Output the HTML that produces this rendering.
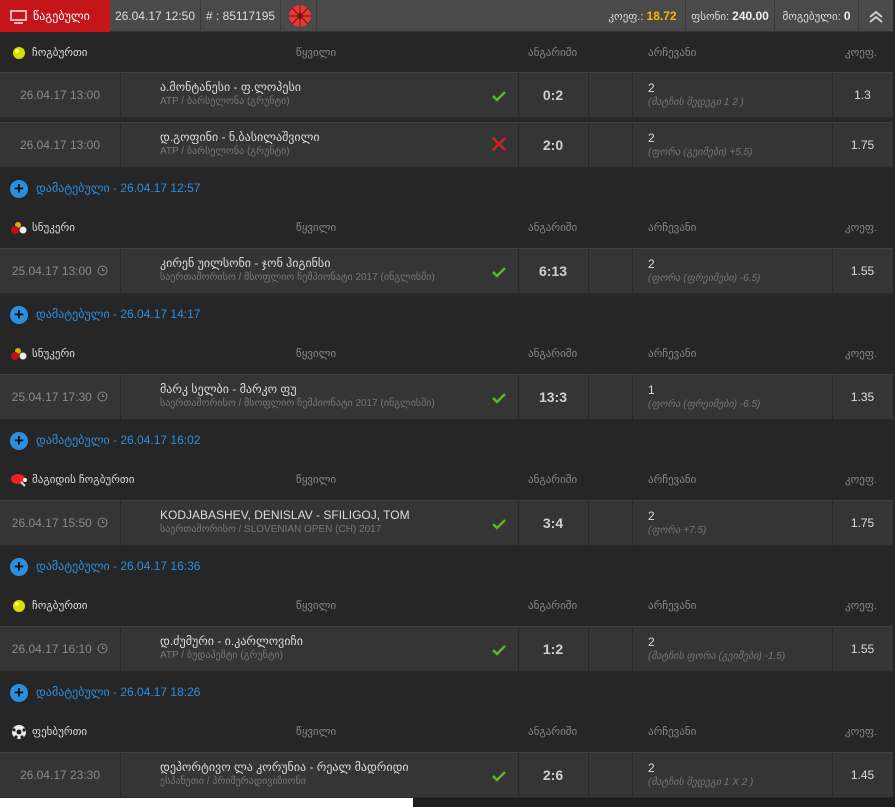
<!DOCTYPE html>
<html><head><meta charset="utf-8"><style>
*{margin:0;padding:0;box-sizing:border-box}
body{width:895px;height:807px;background:#262626;font-family:"Liberation Sans","DejaVu Sans",sans-serif;position:relative;overflow:hidden;color:#ccc}
.top{position:absolute;left:0;top:0;width:893px;height:32px;background:#4a4a4a;border-bottom:1px solid #333;font-size:12px}
.top>div{position:absolute;top:0;height:32px;line-height:32px;border-right:1px solid #3a3a3a}
.abs{position:absolute}
.hdr{position:absolute;left:0;width:893px;height:40px;font-size:11px;color:#888}
.hdr span{position:absolute;top:0;line-height:40px}
.row{position:absolute;left:0;width:893px;height:46px;background:#353535;border-top:1px solid #404040;border-bottom:1px solid #2a2a2a}
.c{position:absolute;top:0;height:44px;border-left:1px solid #262626}
.date{position:absolute;left:0;width:120px;top:0;line-height:44px;text-align:center;color:#8a8a8a;font-size:12px}
.ev{position:absolute;left:160px;top:7px;font-size:12px;color:#ddd;white-space:nowrap}
.ev small{display:block;font-size:10px;color:#777;margin-top:2px}
.score{position:absolute;left:518px;width:70px;line-height:44px;text-align:center;font-weight:bold;font-size:14px;color:#d0d0d0}
.pick{position:absolute;left:648px;top:8px;font-size:12px;color:#ddd}
.pick small{display:block;font-size:10px;color:#777;font-style:italic;margin-top:2px}
.odd{position:absolute;left:833px;width:59px;line-height:44px;text-align:center;font-size:12px;color:#ddd}
.add{position:absolute;left:10px;height:20px;font-size:12px;color:#2b8fe0;line-height:20px}
.add i{display:inline-block;width:18px;height:18px;border-radius:50%;background:#2b8fe0;color:#111;font-style:normal;font-weight:bold;text-align:center;line-height:18px;font-size:17px;vertical-align:middle;margin-right:8px}
.chk{position:absolute;left:492px;top:14px}
</style></head><body>
<div class="top">
 <div style="left:0;width:110px;background:#c4151b;color:#fff;padding-left:10px;border:none">
  <svg width="17" height="14" style="vertical-align:middle;margin-right:6px" viewBox="0 0 17 14"><rect x="1" y="1" width="15" height="9" fill="none" stroke="#f7b4b4" stroke-width="2"/><rect x="4" y="12" width="9" height="2" fill="#f7b4b4"/></svg>წაგებული</div>
 <div style="left:110px;width:91px;text-align:center;color:#ddd">26.04.17 12:50</div>
 <div style="left:201px;width:80px;text-align:center;color:#ddd"># : 85117195</div>
 <div style="left:281px;width:36px"><svg width="24" height="24" style="position:absolute;left:7px;top:4px" viewBox="0 0 24 24"><circle cx="12" cy="12" r="11" fill="#e53935"/><g stroke="#7a1010" stroke-width="1"><line x1="12" y1="1" x2="12" y2="23"/><line x1="1" y1="12" x2="23" y2="12"/><line x1="4" y1="4" x2="20" y2="20"/><line x1="20" y1="4" x2="4" y2="20"/></g><circle cx="12" cy="12" r="3" fill="#7a1010"/></svg></div>
 <div style="left:600px;width:86px;text-align:center;color:#ddd;font-size:11px">კოეფ.: <b style="color:#f5b800;font-size:12px">18.72</b></div>
 <div style="left:686px;width:89px;text-align:center;color:#ddd;font-size:11px">ფსონი: <b style="color:#eee;font-size:12px">240.00</b></div>
 <div style="left:775px;width:84px;text-align:center;color:#ddd;font-size:11px">მოგებული: <b style="color:#eee;font-size:12px">0</b></div>
 <div style="left:859px;width:34px;border:none;text-align:center"><svg width="16" height="14" viewBox="0 0 16 14" style="vertical-align:middle"><path d="M2 7 L8 2 L14 7 M2 12 L8 7 L14 12" fill="none" stroke="#ccc" stroke-width="2"/></svg></div>
</div>
<div class="abs" style="left:0;top:797px;width:413px;height:10px;background:#fff"></div>
<div class="abs" style="left:413px;top:797px;width:482px;height:10px;background:#1e1e1e"></div>
<div id="g"></div>
<script>
const H=(y,icon,name)=>`<div class="hdr" style="top:${y}px"><span style="left:12px;color:#ddd">${icon}</span><span style="left:32px;color:#ddd">${name}</span><span style="left:296px">წყვილი</span><span style="left:528px">ანგარიში</span><span style="left:648px">არჩევანი</span><span style="left:845px">კოეფ.</span></div>`;
const ball='<svg width="14" height="14" style="vertical-align:middle"><circle cx="7" cy="7" r="6" fill="#d6e000"/><circle cx="5" cy="5" r="2" fill="#f2ff60"/></svg>';
const snk='<svg width="18" height="14" style="vertical-align:middle;margin-left:-2px"><circle cx="8" cy="4" r="3" fill="#d8b000"/><circle cx="5" cy="9" r="4" fill="#c01010"/><circle cx="13" cy="9" r="3.5" fill="#eee"/></svg>';
const tt='<svg width="18" height="14" style="vertical-align:middle;margin-left:-2px"><ellipse cx="8" cy="6" rx="7" ry="5" fill="#e22"/><line x1="11" y1="9" x2="15" y2="13" stroke="#ddd" stroke-width="2"/><circle cx="15" cy="7" r="2" fill="#fff"/></svg>';
const fb='<svg width="16" height="16" style="vertical-align:middle;margin-left:-1px"><circle cx="8" cy="8" r="7" fill="#eee"/><circle cx="8" cy="8" r="2.5" fill="#222"/><circle cx="3" cy="6" r="1.6" fill="#222"/><circle cx="13" cy="6" r="1.6" fill="#222"/><circle cx="5" cy="13" r="1.6" fill="#222"/><circle cx="11" cy="13" r="1.6" fill="#222"/></svg>';
const ok='<svg width="14" height="12" viewBox="0 0 14 12"><path d="M1 6 L5 10 L13 2" fill="none" stroke="#5fb526" stroke-width="2.5"/></svg>';
const no='<svg width="14" height="14" viewBox="0 0 14 14"><path d="M1 1 L13 13 M13 1 L1 13" fill="none" stroke="#d32020" stroke-width="2.5"/></svg>';
const clk=' <svg width="11" height="11" style="vertical-align:-1px;margin-left:2px" viewBox="0 0 11 11"><circle cx="5.5" cy="5.5" r="4.5" fill="none" stroke="#8a8a8a"/><path d="M5.5 3 V5.5 H7.5" fill="none" stroke="#8a8a8a"/></svg>';
const R=(y,d,t,s,res,sc,p,ps,o)=>`<div class="row" style="top:${y}px"><div class="date">${d}</div><div class="c" style="left:120px"></div><div class="ev">${t}<small>${s}</small></div><div class="chk" style="top:${res==ok?16:14}px">${res}</div><div class="c" style="left:518px"></div><div class="score">${sc}</div><div class="c" style="left:588px"></div><div class="c" style="left:632px"></div><div class="pick">${p}<small>${ps}</small></div><div class="c" style="left:832px"></div><div class="odd">${o}</div></div>`;
const A=(y,t)=>`<div class="add" style="top:${y}px"><i>+</i>დამატებული - ${t}</div>`;
let h='';
h+=H(33,ball,'ჩოგბურთი');
h+=R(72,'26.04.17 13:00','ა.მონტანესი - ფ.ლოპესი','ATP / ბარსელონა (გრუნტი)',ok,'0:2','2','(მატჩის შედეგი 1 2 )','1.3');
h+=R(122,'26.04.17 13:00','დ.გოფინი - ნ.ბასილაშვილი','ATP / ბარსელონა (გრუნტი)',no,'2:0','2','(ფორა (გეიმები) +5.5)','1.75');
const groups=[
[178,'26.04.17 12:57',snk,'სნუკერი','25.04.17 13:00'+clk,'კირენ უილსონი - ჯონ ჰიგინსი','საერთაშორისო / მსოფლიო ჩემპიონატი 2017 (ინგლისში)','6:13','2','(ფორა (ფრეიმები) -6.5)','1.55'],
[304,'26.04.17 14:17',snk,'სნუკერი','25.04.17 17:30'+clk,'მარკ სელბი - მარკო ფუ','საერთაშორისო / მსოფლიო ჩემპიონატი 2017 (ინგლისში)','13:3','1','(ფორა (ფრეიმები) -6.5)','1.35'],
[430,'26.04.17 16:02',tt,'მაგიდის ჩოგბურთი','26.04.17 15:50'+clk,'KODJABASHEV, DENISLAV - SFILIGOJ, TOM','საერთაშორისო / SLOVENIAN OPEN (CH) 2017','3:4','2','(ფორა +7.5)','1.75'],
[556,'26.04.17 16:36',ball,'ჩოგბურთი','26.04.17 16:10'+clk,'დ.ძუმური - ი.კარლოვიჩი','ATP / ბუდაპეშტი (გრუნტი)','1:2','2','(მატჩის ფორა (გეიმები) -1.5)','1.55'],
[682,'26.04.17 18:26',fb,'ფეხბურთი','26.04.17 23:30','დეპორტივო ლა კორუნია - რეალ მადრიდი','ესპანეთი / პრიმერადივიზიონი','2:6','2','(მატჩის შედეგი 1 X 2 )','1.45']];
for(const g of groups){h+=A(g[0],g[1]);h+=H(g[0]+30,g[2],g[3]);h+=R(g[0]+70,g[4],g[5],g[6],ok,g[7],g[8],g[9],g[10]);}
document.getElementById('g').innerHTML=h;
</script>
</body></html>
